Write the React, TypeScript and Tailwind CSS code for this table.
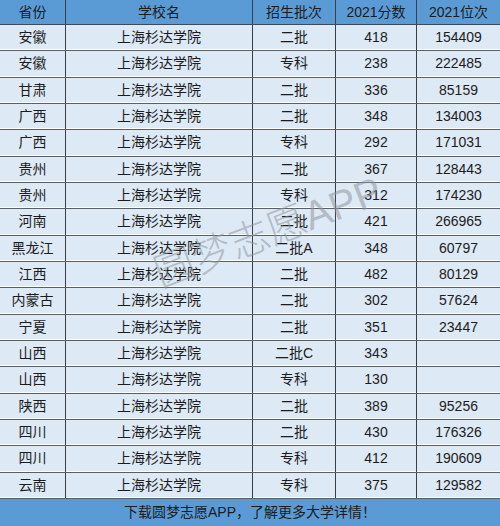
const rows: [string, string, string, string, string][] = [
  ["安徽", "上海杉达学院", "二批", "418", "154409"],
  ["安徽", "上海杉达学院", "专科", "238", "222485"],
  ["甘肃", "上海杉达学院", "二批", "336", "85159"],
  ["广西", "上海杉达学院", "二批", "348", "134003"],
  ["广西", "上海杉达学院", "专科", "292", "171031"],
  ["贵州", "上海杉达学院", "二批", "367", "128443"],
  ["贵州", "上海杉达学院", "专科", "312", "174230"],
  ["河南", "上海杉达学院", "二批", "421", "266965"],
  ["黑龙江", "上海杉达学院", "二批A", "348", "60797"],
  ["江西", "上海杉达学院", "二批", "482", "80129"],
  ["内蒙古", "上海杉达学院", "二批", "302", "57624"],
  ["宁夏", "上海杉达学院", "二批", "351", "23447"],
  ["山西", "上海杉达学院", "二批C", "343", ""],
  ["山西", "上海杉达学院", "专科", "130", ""],
  ["陕西", "上海杉达学院", "二批", "389", "95256"],
  ["四川", "上海杉达学院", "二批", "430", "176326"],
  ["四川", "上海杉达学院", "专科", "412", "190609"],
  ["云南", "上海杉达学院", "专科", "375", "129582"],
];

const headers = ["省份", "学校名", "招生批次", "2021分数", "2021位次"];

const cols = "grid grid-cols-[66px_187px_83px_81px_83px]";

export default function App() {
  return (
    <div
      className="relative w-[500px] h-[526px] overflow-hidden bg-[#dde9f5] text-[14px] text-[#1c1c1c]"
      style={{ fontFamily: '"Liberation Sans", "Noto Sans CJK SC", sans-serif' }}
    >
      <div className={`${cols} h-[25px] bg-[#5b9bd5] border-b border-[#3d4a57]`}>
        {headers.map((h, i) => (
          <div
            key={h}
            className={`flex items-center justify-center ${i < 4 ? "border-r border-[#3a3f45]" : ""}`}
          >
            {h}
          </div>
        ))}
      </div>
      {rows.map((r, ri) => (
        <div
          key={ri}
          className={`${cols} h-[26.33px] border-b border-[#5a5f66] shadow-[inset_0_-1px_0_#ffffff]`}
        >
          {r.map((c, i) => (
            <div
              key={i}
              className={`flex items-center justify-center ${i < 4 ? "border-r border-[#3a3f45]" : ""}`}
            >
              {c}
            </div>
          ))}
        </div>
      ))}
      <div className="h-[27px] bg-[#5b9bd5] flex items-center justify-center">
        下载圆梦志愿APP，了解更多大学详情！
      </div>

      {/* watermark */}
      <div className="pointer-events-none absolute left-[100px] top-[208px] w-[300px] h-[48px] flex items-center justify-center whitespace-nowrap rotate-[-21deg] translate-x-[18px] text-[40px] leading-none font-extralight text-[#8e959c]/55">
        圆梦志愿APP
      </div>
    </div>
  );
}
